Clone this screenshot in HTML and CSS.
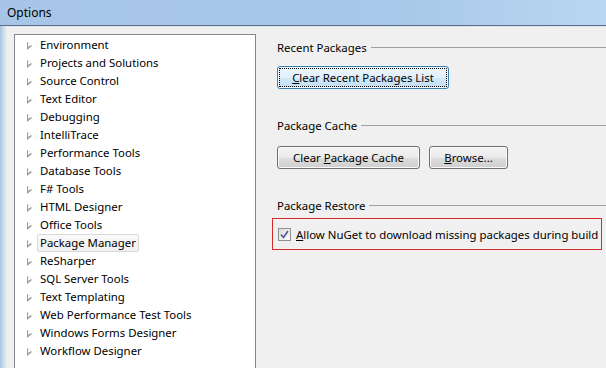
FILE: index.html
```html
<!DOCTYPE html>
<html lang="en">
<head>
	<meta charset="UTF-8">
	<title>Options</title>
	<link rel="stylesheet" href="styles.css">
</head>
<body>
	<div class="window">
		<div class="titleBar">Options</div>
		<div class="frame">
			<div class="frameEdge"></div>
			<div class="content">
				<ul class="tree">
					<li><span class="arrow"></span><span class="label">Environment</span></li>
					<li><span class="arrow"></span><span class="label">Projects and Solutions</span></li>
					<li><span class="arrow"></span><span class="label">Source Control</span></li>
					<li><span class="arrow"></span><span class="label">Text Editor</span></li>
					<li><span class="arrow"></span><span class="label">Debugging</span></li>
					<li><span class="arrow"></span><span class="label">IntelliTrace</span></li>
					<li><span class="arrow"></span><span class="label">Performance Tools</span></li>
					<li><span class="arrow"></span><span class="label">Database Tools</span></li>
					<li><span class="arrow"></span><span class="label">F# Tools</span></li>
					<li><span class="arrow"></span><span class="label">HTML Designer</span></li>
					<li><span class="arrow"></span><span class="label">Office Tools</span></li>
					<li class="selected"><span class="arrow"></span><span class="label">Package Manager</span></li>
					<li><span class="arrow"></span><span class="label">ReSharper</span></li>
					<li><span class="arrow"></span><span class="label">SQL Server Tools</span></li>
					<li><span class="arrow"></span><span class="label">Text Templating</span></li>
					<li><span class="arrow"></span><span class="label">Web Performance Test Tools</span></li>
					<li><span class="arrow"></span><span class="label">Windows Forms Designer</span></li>
					<li><span class="arrow"></span><span class="label">Workflow Designer</span></li>
				</ul>

				<div class="settings">
					<div class="group first">Recent Packages</div>
					<div class="buttonRow first">
						<button class="button focused wide"><u>C</u>lear Recent Packages List</button>
					</div>

					<div class="group">Package Cache</div>
					<div class="buttonRow">
						<button class="button cache">Clear <u>P</u>ackage Cache</button>
						<button class="button browse"><u>B</u>rowse...</button>
					</div>

					<div class="group">Package Restore</div>
					<div class="restore">
						<span class="checkbox">
							<svg width="13" height="13" viewBox="0 0 13 13">
								<path d="M3 6.5 L5.5 9.5 L10 3" fill="none" stroke="#4b5a9a" stroke-width="1.6"/>
							</svg>
						</span>
						<span><u>A</u>llow NuGet to download missing packages during build</span>
					</div>
				</div>
			</div>
		</div>
	</div>
</body>
</html>
```

FILE: styles.css
```css
*{
	margin: 0;
	padding: 0;
	box-sizing: border-box;
}
html, body{
	width: 606px;
	height: 368px;
	overflow: hidden;
}
body{
	font-family: "Noto Sans", "Open Sans", sans-serif;
	font-size: 11.4px;
	color: #000;
	background-color: #f0f0f0;
}
.window{
	display: flex;
	flex-direction: column;
	height: 368px;
	overflow: hidden;
}
.titleBar{
	flex-shrink: 0;
	height: 26px;
	padding: 4px 0 0 7px;
	line-height: 17px;
	font-size: 12px;
	background: linear-gradient(to right, #a7c6e7, #a8c8e9 65%, #b9d7f3);
	border-bottom: 1px solid #5c6d8c;
	box-shadow: 0 1px 0 #dbe4ee;
}
.frame{
	flex: 1;
	display: flex;
	min-height: 0;
}
.frameEdge{
	width: 6px;
	background: linear-gradient(to right, #a9c3df, #cddff1 60%, #dfe6ee);
}
.content{
	flex: 1;
	display: flex;
	align-items: flex-start;
	padding: 8px 0 0 8px;
}

/* tree on the left */
.tree{
	list-style: none;
	width: 242px;
	height: 340px;
	padding-top: 1px;
	background-color: #fff;
	border: 1px solid #828790;
	border-bottom: none;
}
.tree>li{
	display: flex;
	align-items: center;
	height: 18px;
	padding-left: 12px;
}
.tree .arrow{
	position: relative;
	width: 0;
	height: 0;
	margin-top: 2px;
	margin-right: 5px;
	border-top: 4.5px solid transparent;
	border-bottom: 4.5px solid transparent;
	border-left: 5px solid #9a9a9a;
}
.tree .arrow::after{
	content: "";
	position: absolute;
	left: -4px;
	top: -2.7px;
	border-top: 2.7px solid transparent;
	border-bottom: 2.7px solid transparent;
	border-left: 3px solid #fff;
}
.tree .label{
	padding: 0 2px;
	line-height: 16px;
	border: 1px solid transparent;
	white-space: nowrap;
}
.tree>li.selected .label{
	border-color: #d9d9d9;
	border-radius: 2px;
	background: linear-gradient(#fafafa, #f0f0f0);
}

/* settings on the right */
.settings{
	flex: 1;
	padding-left: 21px;
}
.group{
	display: flex;
	align-items: center;
	height: 18px;
	margin-top: 27px;
}
.group.first{
	margin-top: 4px;
}
.group::after{
	content: "";
	flex: 1;
	height: 1px;
	margin-left: 4px;
	margin-top: 1px;
	background-color: #a0a0a0;
}
.buttonRow{
	display: flex;
	gap: 9px;
	margin-top: 12px;
}
.buttonRow.first{
	margin-top: 10px;
}
.button{
	height: 23px;
	font-family: inherit;
	font-size: 11.4px;
	color: #000;
	border: 1px solid #707070;
	border-radius: 3px;
	background: linear-gradient(#f2f2f2, #ebebeb 50%, #dddddd 51%, #cfcfcf);
	box-shadow: inset 0 0 0 1px #fbfbfb;
}
.button.wide{
	width: 172px;
}
.button.cache{
	width: 143px;
}
.button.browse{
	width: 79px;
}
.button.focused{
	border-color: #3c7fb1;
	background: linear-gradient(#eaf5fc, #e2f0fa 50%, #d1e8f8 51%, #c3dff3);
	box-shadow: inset 0 0 0 1px #f2f9fe;
	outline: 1px dotted #000;
	outline-offset: -3px;
}
.restore{
	display: flex;
	align-items: center;
	gap: 5px;
	width: 330px;
	height: 32px;
	margin: 4px 0 0 -5px;
	padding-left: 5px;
	border: 1px solid #d32a2a;
	white-space: nowrap;
}
.checkbox{
	display: block;
	width: 13px;
	height: 13px;
	border: 1px solid #8e8f8f;
	background: linear-gradient(135deg, #dcdcdc, #fdfdfd);
}
.checkbox svg{
	display: block;
	margin: -1px;
}
```
